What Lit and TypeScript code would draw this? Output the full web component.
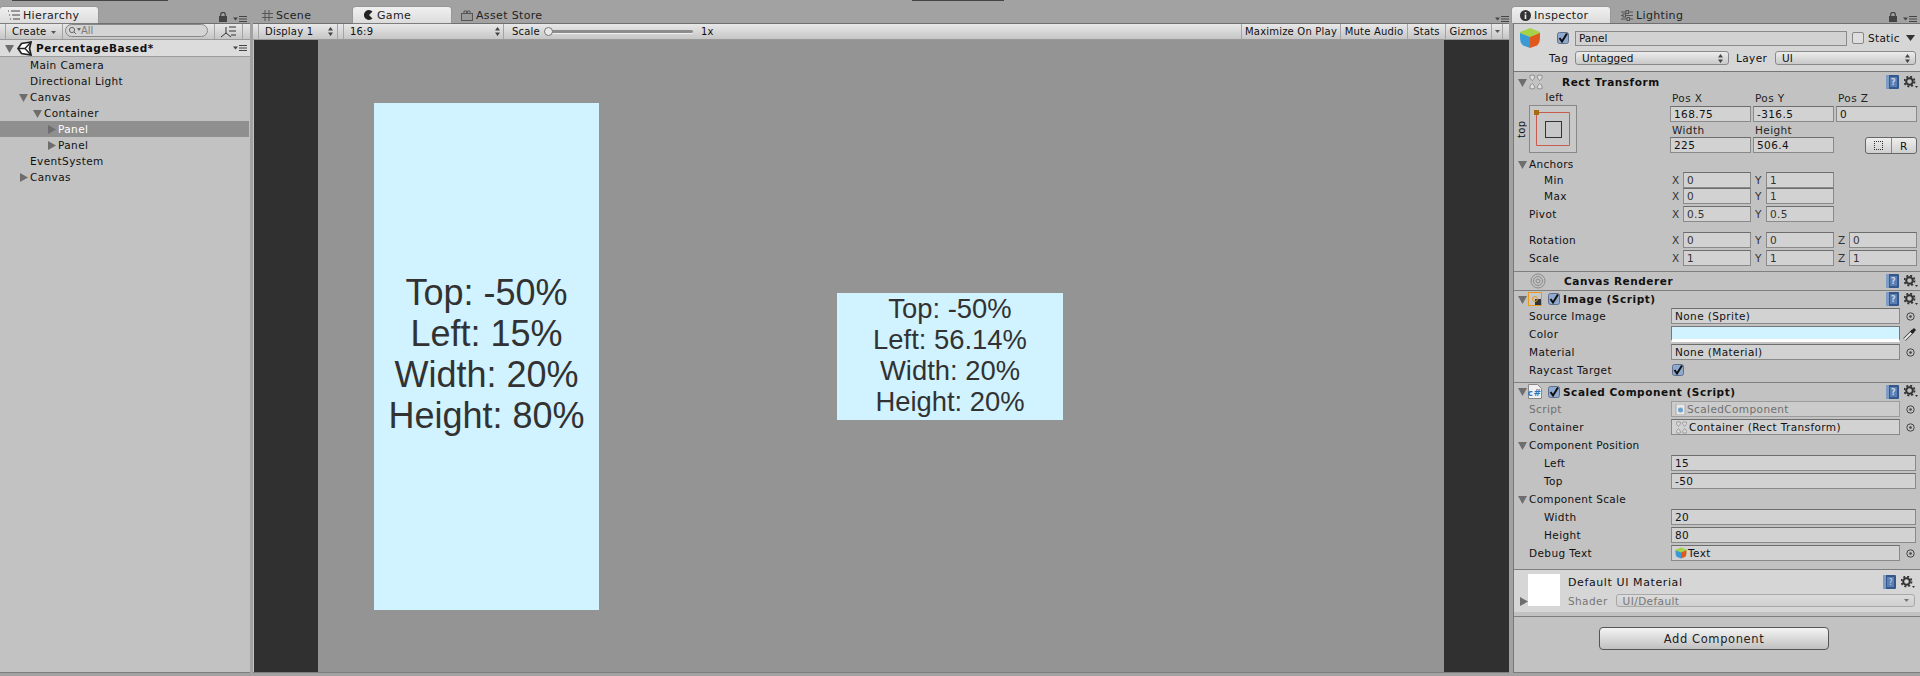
import { LitElement, html, css } from 'lit'
import { customElement } from 'lit/decorators.js'

const arrowDown = html`<svg class="fold" width="9" height="9" viewBox="0 0 9 9"><path d="M0 1h9L4.5 9z" fill="#6e6e6e"/></svg>`
const arrowRight = html`<svg class="fold" width="9" height="9" viewBox="0 0 9 9"><path d="M1 0v9l8-4.5z" fill="#6e6e6e"/></svg>`
const updown = html`<svg class="updown" width="5" height="9" viewBox="0 0 5 9"><path d="M0 3.5h5L2.5 0zM0 5.5h5L2.5 9z" fill="#444"/></svg>`
const menuIcon = html`<svg class="menu" width="14" height="6" viewBox="0 0 14 6"><path d="M0 1.5h5L2.5 4.5z" fill="#444"/><path d="M6 .5h8M6 3h8M6 5.5h8" stroke="#444" fill="none"/></svg>`
const lockIcon = html`<svg width="8" height="10" viewBox="0 0 8 10"><rect y="4" width="8" height="6" fill="#444"/><path d="M1.7 4.5V2.6a2.3 2.3 0 0 1 4.6 0v1.9" fill="none" stroke="#444" stroke-width="1.2"/></svg>`
const cube = (s: number) => html`<svg width=${s} height=${s} viewBox="0 0 22 22">
  <path d="M11 1 21 5v4l-10 4L1 9V5z" fill="#a6d24a"/>
  <path d="M1 6l10 4v11l-7-2.5C2 17 1 14 1 10z" fill="#3a9ad6"/>
  <path d="M21 6l-10 4v11l7-2.5c2-1.500 3-4.500 3-8.500z" fill="#e0591c"/>
</svg>`
const check = html`<svg class="check" width="12" height="12" viewBox="0 0 12 12"><rect x=".5" y=".5" width="11" height="11" rx="2" fill="#8fa9cf" stroke="#5d6f8c"/><path d="M2.500 6l2.500 3.500L10 1.500" fill="none" stroke="#111" stroke-width="2"/></svg>`
const book = html`<svg width="13" height="14" viewBox="0 0 13 14"><rect x="1" width="12" height="14" rx="1" fill="#34588c"/><rect width="3" height="14" fill="#7f9cc4"/><rect x="4" y="2" width="7" height="10" fill="#5b7fb2"/><text x="7.500" y="10" font-size="8" fill="#c9d6e8" text-anchor="middle" font-family="DejaVu Sans">?</text></svg>`
const gear = html`<svg width="14" height="13" viewBox="0 0 14 13"><circle cx="5.500" cy="5.500" r="3.300" fill="none" stroke="#333" stroke-width="2"/><circle cx="5.500" cy="5.500" r="5" fill="none" stroke="#333" stroke-width="1.800" stroke-dasharray="2 1.930"/><path d="M11 10h3l-1.500 2z" fill="#333"/></svg>`
const dotPick = html`<svg class="pick" width="9" height="9" viewBox="0 0 9 9"><circle cx="4.500" cy="4.500" r="3.700" fill="none" stroke="#444"/><circle cx="4.500" cy="4.500" r="1.300" fill="#444"/></svg>`
const rectIcon = (s: number) => html`<svg width=${s} height=${s} viewBox="0 0 16 16" fill="#dedede" stroke="#858585" stroke-width=".9" stroke-linejoin="round">
  <path d="M2 1.500C4 .8 6 1 7 2 6.500 3.500 5.500 5.500 4.500 6.500 3 6 1.500 4 2 1.500z"/>
  <path d="M14 1.500C12 .8 10 1 9 2c.5 1.500 1.500 3.500 2.500 4.500C13 6 14.500 4 14 1.500z"/>
  <path d="M2 14.500C4 15.200 6 15 7 14 6.500 12.500 5.500 10.500 4.500 9.500 3 10 1.500 12 2 14.500z"/>
  <path d="M14 14.500c-2 .7-4 .5-5-.5.5-1.500 1.500-3.500 2.500-4.500 1.500.5 3 2.500 2.500 5z"/>
</svg>`

const treeRows = [
  { name: 'Main Camera', depth: 0 },
  { name: 'Directional Light', depth: 0 },
  { name: 'Canvas', depth: 0, open: true },
  { name: 'Container', depth: 1, open: true },
  { name: 'Panel', depth: 2, closed: true, selected: true },
  { name: 'Panel', depth: 2, closed: true },
  { name: 'EventSystem', depth: 0 },
  { name: 'Canvas', depth: 0, closed: true },
]

const gamePanels = [
  { left: 56, top: 63, w: 225, h: 507, size: 36, line: 41, lift: 6, lines: ['Top: -50%', 'Left: 15%', 'Width: 20%', 'Height: 80%'] },
  { left: 519, top: 253, w: 226, h: 127, size: 27.4, line: 31, lift: 4, lines: ['Top: -50%', 'Left: 56.14%', 'Width: 20%', 'Height: 20%'] },
]

@customElement('app-root')
export class AppRoot extends LitElement {
  static styles = css`
    :host {
      display: block;
      width: 1920px;
      height: 676px;
      overflow: hidden;
      background: #a2a2a2;
      font-family: 'DejaVu Sans', sans-serif;
      font-size: 10.5px;
      color: #111;
    }
    svg { display: block; flex: none; }
    .top-strip { height: 7px; display: flex; }
    .top-strip i { display: block; height: 1px; background: #444; }
    .top-strip .a { width: 156px; margin-left: 12px; }
    .top-strip .b { width: 92px; margin-left: 744px; }
    .main { display: grid; grid-template-columns: 250px 1256px 407px; column-gap: 3px; }
    .main > :last-child { margin-left: 1px; width: 407px; }
    .pane { height: 666px; display: flex; flex-direction: column; }

    .tabs { height: 16px; display: flex; align-items: flex-end; position: relative; }
    .tab {
      height: 16px; width: 98px; display: flex; align-items: center; gap: 3px; box-sizing: border-box;
      padding-left: 8px; font-size: 11px; color: #222; flex: none; letter-spacing: .35px;
    }
    .tab.on { background: linear-gradient(#f0f0f0, #dcdcdc); border-radius: 3px 3px 0 0; box-shadow: 0 0 0 .5px #8c8c8c; }
    .tab.scene { width: 100px; }
    .tab.scene svg { margin-left: 1px; }
    .tab.game svg { margin-left: 2px; }
    .tab.store { padding-left: 10px; }
    .tab.light { padding-left: 11px; width: 90px; }
    .tabs .tail { margin-left: auto; display: flex; align-items: flex-end; gap: 6px; padding: 0 3px 1px 0; }
    .tabs .tail.flush { padding-right: 0; }
    .tabs.pull { margin-left: -1px; }

    .body { flex: 1; height: 650px; background: #c2c2c2; border-top: 1px solid #6f6f6f; border-bottom: 1px solid #7d7d7d; display: flex; flex-direction: column; box-sizing: border-box; }

    .toolbar {
      height: 16px; flex: none; display: flex; align-items: stretch; box-sizing: border-box;
      background: linear-gradient(#e8e8e8, #c6c6c6); border-bottom: 1px solid #999; font-size: 10px;
    }
    .toolbar .cell { display: flex; align-items: center; box-sizing: border-box; border-right: 1px solid #a4a4a4; flex: none; letter-spacing: .2px; }

    /* hierarchy */
    .h-create { width: 58px; padding-left: 6px; margin-left: 5px; border-left: 1px solid #a4a4a4; gap: 5px; }
    .h-create svg { margin-top: 1px; }
    .search {
      width: 143px; height: 13px; margin: 0 6px 0 2px; border: 1px solid #888; border-radius: 8px; flex: none;
      display: flex; align-items: center; padding-left: 2px; box-sizing: border-box; color: #7b7b7b; background: #d4d4d4;
    }
    .h-tool { width: 29px; justify-content: center; border-left: 1px solid #a4a4a4; }
    .scene-row { height: 17px; flex: none; display: flex; align-items: center; background: #dcdcdc; border-bottom: 1px solid #9c9c9c; box-sizing: border-box; padding: 0 3px 0 5px; font-weight: bold; letter-spacing: .55px; }
    .scene-row .logo { margin: 0 4px 0 3px; }
    .scene-row .menu { margin-left: auto; }
    .tree-row { height: 16px; display: flex; align-items: center; letter-spacing: .4px; }
    .tree-row.sel { background: #8f8f8f; color: #fff; margin-right: 1px; }
    .tree-row .twist { width: 11px; flex: none; }
    .tree-row.d0 { padding-left: 19px; }
    .tree-row.d1 { padding-left: 33px; }
    .tree-row.d2 { padding-left: 47px; }
    .tree-row .twist svg { margin-top: 1px; }

    /* game */
    .game-tools .sp { width: 6px; flex: none; border-right: 1px solid #a4a4a4; box-sizing: border-box; }
    .game-tools .first { margin-left: 5px; border-left: 1px solid #a4a4a4; }
    .game-tools .display { width: 80px; padding: 0 4px 0 6px; justify-content: space-between; }
    .game-tools .ratio { width: 160px; padding: 0 3px 0 6px; justify-content: space-between; }
    .game-tools .scale { flex: 1; border-right: 0; padding-left: 8px; gap: 4px; }
    .slider { width: 149px; height: 3px; background: #8c8c8c; border-radius: 2px; position: relative; box-shadow: 0 1px 0 #eee; }
    .slider i { position: absolute; left: 0; top: -3px; width: 9px; height: 9px; border-radius: 50%; background: #e9e9e9; border: 1px solid #777; box-sizing: border-box; }
    .game-tools .scale b { font-weight: normal; margin-left: 4px; }
    .game-tools .btn { justify-content: center; }
    .game-tools .max { width: 100px; border-left: 1px solid #a4a4a4; }
    .game-tools .mute { width: 67px; }
    .game-tools .stats { width: 38px; }
    .game-tools .giz { width: 46px; }
    .game-tools .drop { width: 11px; justify-content: center; }
    .game-tools .end { width: 6px; border-right: 0; }
    .view { flex: 1; display: grid; grid-template-columns: 64px 1126px 64px; margin-left: 1px; background: #303030; }
    .canvas { background: #949494; position: relative; }
    .ui-panel {
      position: absolute; background: #d1f3ff; color: #323232; box-sizing: border-box;
      display: flex; flex-direction: column; align-items: center; justify-content: center;
      font-family: 'Liberation Sans', Arial, sans-serif;
    }

    /* inspector */
    .insp { border-left: 1px solid #777; }
    .obj { height: 48px; flex: none; background: #d6d6d6; box-sizing: border-box; padding: 6px 0 0 5px; border-bottom: 1px solid #777; }
    .obj-line { display: flex; align-items: center; height: 16px; }
    .obj-line.tagline { margin-top: 4px; }
    .obj .thumb { width: 38px; flex: none; }
    .obj-name { width: 272px; height: 15px; margin-left: 6px; background: #d2d2d2; border: 1px solid #8a8a8a; box-sizing: border-box; padding-left: 3px; display: flex; align-items: center; }
    .box { width: 12px; height: 12px; border: 1px solid #888; border-radius: 2px; box-sizing: border-box; background: #dedede; margin-left: 5px; flex: none; }
    .obj-static { margin-left: 4px; letter-spacing: .3px; }
    .tri-down { margin-left: 6px; }
    .tag-l { width: 56px; padding-left: 30px; box-sizing: border-box; flex: none; letter-spacing: .6px; }
    .pop { height: 14px; border: 1px solid #8a8a8a; border-radius: 3px; box-sizing: border-box; background: linear-gradient(#ececec, #c9c9c9); display: flex; align-items: center; justify-content: space-between; padding: 0 5px 0 6px; }
    .pop.tag { width: 154px; }
    .pop.layer { width: 141px; }
    .lay-l { width: 46px; padding-left: 7px; box-sizing: border-box; flex: none; letter-spacing: .4px; }

    .sec { border-top: 1px solid #7f7f7f; flex: none; }
    .sec.none { border-top: 0; }
    .comp-h { display: flex; align-items: center; height: 16px; padding: 0 2px 0 4px; font-weight: bold; letter-spacing: .55px; }
    .comp-h.tall { height: 20px; }
    .comp-h.canvas-h { height: 18px; }
    .comp-h.script-h { height: 17px; }
    .comp-h .blank { width: 11px; flex: none; }
    .comp-h .ic { width: 16px; height: 16px; flex: none; margin-left: 1px; display: flex; align-items: center; }
    .comp-h .cb { margin-left: 4px; flex: none; }
    .comp-h .title { margin-left: 3px; }
    .comp-h .title.wide { margin-left: 18px; }
    .comp-h .right { margin-left: auto; display: flex; align-items: center; gap: 5px; }

    .row { height: 18px; display: grid; grid-template-columns: 156px 1fr; align-items: center; padding-right: 4px; letter-spacing: .4px; }
    .row.s16 { height: 16px; }
    .row.tight { margin-bottom: -1px; }
    .row.pivot { margin-top: 1px; }
    .row.rot { margin-top: 8px; }
    .row.last { margin-bottom: 4px; }
    .row .lbl { padding-left: 15px; display: flex; align-items: center; }
    .row .lbl.fold-l { padding-left: 4px; gap: 2px; letter-spacing: .3px; }
    .row .lbl.sub { padding-left: 30px; }
    .row .dim { color: #6f6f6f; }
    .fld { height: 16px; background: #d2d2d2; border: 1px solid #8a8a8a; border-top-color: #6d6d6d; box-sizing: border-box; padding-left: 3px; display: flex; align-items: center; gap: 1px; white-space: nowrap; overflow: hidden; letter-spacing: .4px; }
    .fld.dim { background: #cbcbcb; border-color: #9c9c9c; }
    .with-pick { display: grid; grid-template-columns: 229px 1fr; align-items: center; margin-left: 1px; }
    .with-pick .pick { margin-left: 6px; }
    .with-pick .dropper { margin-left: 3px; }
    .wide-fld { margin-left: 1px; }
    .color { height: 16px; background: #d1f3ff; border: 1px solid #777; border-bottom: 3px solid #fff; box-sizing: border-box; }
    .ray { margin-left: 2px; }
    .gap3 { height: 3px; }
    .gap7 { height: 7px; }
    .xyz { display: grid; grid-template-columns: repeat(3, 81px); column-gap: 2px; }
    .xyz .c { display: grid; grid-template-columns: 13px 68px; align-items: center; color: #333; }
    .xyz .c span { padding-left: 2px; }
    .rect-grid { display: grid; grid-template-columns: 156px 1fr; height: 63px; padding-right: 4px; letter-spacing: .4px; }
    .anchor { display: grid; grid-template-columns: 15px 48px; grid-template-rows: 13px 48px; }
    .anchor .l { grid-column: 2; padding-left: 3px; text-align: center; line-height: 11px; font-size: 10px; }
    .anchor .t { writing-mode: vertical-rl; transform: rotate(180deg); text-align: center; font-size: 10px; line-height: 15px; grid-row: 2; }
    .anchor .w { grid-column: 2; grid-row: 2; }
    .trip { display: grid; grid-template-columns: repeat(3, 81px); column-gap: 2px; grid-template-rows: 14px 16px 15px 16px; }
    .trip .cap { padding-left: 2px; color: #222; line-height: 12px; }
    .trip .cap.w2 { align-self: center; }
    .rbtns { display: flex; height: 17px; width: 52px; justify-self: end; border: 1px solid #666; border-radius: 3px; box-sizing: border-box; background: linear-gradient(#eee, #cfcfcf); }
    .rbtns span { flex: 1; display: flex; align-items: center; justify-content: center; }
    .rbtns span + span { border-left: 1px solid #888; }
    .rbtns i { display: block; width: 9px; height: 9px; border: 1px dotted #333; box-sizing: border-box; }

    .mat { height: 43px; background: #d6d6d6; border-top: 1px solid #7f7f7f; box-sizing: border-box; display: flex; flex: none; padding: 4px 2px 0 5px; }
    .mat .foldbox { display: flex; align-items: flex-end; height: 32px; }
    .mat .sw { width: 32px; height: 32px; background: #fff; flex: none; }
    .mat .col { flex: 1; padding-left: 8px; }
    .mat .t1 { height: 16px; display: flex; align-items: center; font-size: 11px; letter-spacing: .6px; }
    .mat .t1 .right { margin-left: auto; display: flex; gap: 5px; margin-right: 3px; align-items: center; letter-spacing: 0; }
    .mat .t2 { display: flex; align-items: center; margin-top: 4px; color: #777; letter-spacing: .4px; }
    .mat .pop { margin-left: 8px; width: 299px; height: 13px; color: #777; border-color: #a8a8a8; background: linear-gradient(#dcdcdc, #cfcfcf); }
    .add-wrap { flex: 1; border-top: 1px solid #7f7f7f; margin-top: 4px; display: flex; justify-content: center; padding-top: 10px; }
    .add { width: 230px; height: 23px; margin-left: -6px; border: 1px solid #555; border-radius: 4px; box-sizing: border-box; background: linear-gradient(#f4f4f4, #c0c0c0); display: flex; align-items: center; justify-content: center; font-size: 11.5px; letter-spacing: .6px; color: #222; }
  `

  // a label on the left, a field or other value on the right
  row(label: unknown, value: unknown, kind = '') {
    return html`<div class="row"><div class="lbl ${kind}">${label}</div><div>${value}</div></div>`
  }

  fold(label: string, extra = '') {
    return html`<div class="row ${extra}"><div class="lbl fold-l">${arrowDown}<span>${label}</span></div><div></div></div>`
  }

  picked(text: unknown, dim = false) {
    return html`<div class="with-pick"><div class="fld ${dim ? 'dim' : ''}">${text}</div>${dotPick}</div>`
  }

  xyz(vals: string[]) {
    const names = ['X', 'Y', 'Z']
    return html`<div class="xyz">${vals.map(
      (v, i) => html`<div class="c"><span>${names[i]}</span><div class="fld">${v}</div></div>`,
    )}</div>`
  }

  compRight() {
    return html`<div class="right">${book}${gear}</div>`
  }

  hierarchy() {
    return html`<div class="pane">
      <div class="tabs">
        <div class="tab on"><svg width="12" height="10" viewBox="0 0 12 10"><path d="M0 1h1M3 1h9M1 5h1M4 5h8M2 9h1M5 9h7" stroke="#444" fill="none"/></svg>Hierarchy</div>
        <div class="tail">${lockIcon}${menuIcon}</div>
      </div>
      <div class="body">
        <div class="toolbar">
          <div class="cell h-create">Create<svg width="5" height="3" viewBox="0 0 5 3"><path d="M0 0h5L2.500 3z" fill="#555"/></svg></div>
          <div class="search">
            <svg width="13" height="9" viewBox="0 0 13 9"><circle cx="4" cy="4" r="2.600" fill="none" stroke="#666"/><path d="M6 6l2 2" stroke="#666"/><path d="M9 2h4l-2 3z" fill="#666"/></svg>
            All
          </div>
          <div class="cell h-tool">
            <svg width="17" height="14" viewBox="0 0 17 14"><path d="M1 12l5-4 5 4M6 8V2M9 2h7M9 6h7M11 10h5" stroke="#333" fill="none"/></svg>
          </div>
        </div>
        <div class="scene-row">
          ${arrowDown}
          <svg class="logo" width="15" height="15" viewBox="0 0 15 15"><path d="M14 1 4.500 2.500 1 7.500l3.500 5L14 14l-1.500-6.500z" fill="#fff" stroke="#222" stroke-width="1.700"/><path d="M1 7.500h7L14 1M8 7.500 14 14" stroke="#222" stroke-width="1.400" fill="none"/></svg>
          <span>PercentageBased*</span>
          ${menuIcon}
        </div>
        ${treeRows.map(
          (r) => html`<div class="tree-row d${r.depth} ${r.selected ? 'sel' : ''}">
            ${r.open || r.closed
              ? html`<div class="twist">${r.open ? arrowDown : arrowRight}</div>`
              : html`<div class="twist"></div>`}
            <span>${r.name}</span>
          </div>`,
        )}
      </div>
    </div>`
  }

  game() {
    return html`<div class="pane">
      <div class="tabs">
        <div class="tab scene"><svg width="11" height="11" viewBox="0 0 11 11"><path d="M3 0v11M7 0v11M0 3.500h11M0 7.500h11" stroke="#555" fill="none"/></svg>Scene</div>
        <div class="tab on game"><svg width="11" height="10" viewBox="0 0 11 10"><path d="M9.500 1.500A5 5 0 1 0 9.500 8.500L6 5z" fill="#222"/></svg>Game</div>
        <div class="tab store"><svg width="12" height="11" viewBox="0 0 12 11"><rect x=".5" y="3.500" width="11" height="7" fill="#999" stroke="#555"/><path d="M3 3.500V1h2.500v2.500M6.500 3.500V1H9v2.500" fill="none" stroke="#555"/></svg>Asset&nbsp;Store</div>
        <div class="tail flush">${menuIcon}</div>
      </div>
      <div class="body">
        <div class="toolbar game-tools">
          <div class="cell display first">Display 1 ${updown}</div>
          <div class="sp"></div>
          <div class="cell ratio">16:9 ${updown}</div>
          <div class="cell scale">Scale<div class="slider"><i></i></div><b>1x</b></div>
          <div class="cell btn max">Maximize On Play</div>
          <div class="cell btn mute">Mute Audio</div>
          <div class="cell btn stats">Stats</div>
          <div class="cell btn giz">Gizmos</div>
          <div class="cell drop"><svg width="5" height="3" viewBox="0 0 5 3"><path d="M0 0h5L2.500 3z" fill="#555"/></svg></div>
          <div class="cell end"></div>
        </div>
        <div class="view">
          <div></div>
          <div class="canvas">
            ${gamePanels.map(
              (p) => html`<div class="ui-panel" style="left:${p.left}px;top:${p.top}px;width:${p.w}px;height:${p.h}px;font-size:${p.size}px;line-height:${p.line}px;padding-bottom:${p.lift}px">
                ${p.lines.map((l) => html`<div>${l}</div>`)}
              </div>`,
            )}
          </div>
          <div></div>
        </div>
      </div>
    </div>`
  }

  rectTransform() {
    return html`<div class="comp-h tall">
        ${arrowDown}<div class="ic">${rectIcon(16)}</div><span class="title wide">Rect Transform</span>${this.compRight()}
      </div>
      <div class="rect-grid">
        <div class="anchor">
          <div class="l">left</div>
          <div class="t">top</div>
          <div class="w">
            <svg width="48" height="48" viewBox="0 0 48 48">
              <rect x=".5" y=".5" width="47" height="47" fill="#c8c8c8" stroke="#888"/>
              <path d="M7.500 7.500h33v33h-33z" fill="none" stroke="#c85a50"/>
              <rect x="5" y="5" width="5" height="5" fill="#a66a10"/>
              <rect x="16.500" y="16.500" width="16" height="16" fill="none" stroke="#333"/>
            </svg>
          </div>
        </div>
        <div class="trip">
          <div class="cap">Pos X</div><div class="cap">Pos Y</div><div class="cap">Pos Z</div>
          <div class="fld">168.75</div><div class="fld">-316.5</div><div class="fld">0</div>
          <div class="cap w2">Width</div><div class="cap w2">Height</div><div></div>
          <div class="fld">225</div><div class="fld">506.4</div>
          <div class="rbtns"><span><i></i></span><span>R</span></div>
        </div>
      </div>
      ${this.fold('Anchors', 'tight')}
      <div class="row s16"><div class="lbl sub">Min</div>${this.xyz(['0', '1'])}</div>
      <div class="row s16"><div class="lbl sub">Max</div>${this.xyz(['0', '1'])}</div>
      <div class="row pivot"><div class="lbl">Pivot</div>${this.xyz(['0.5', '0.5'])}</div>
      <div class="row rot"><div class="lbl">Rotation</div>${this.xyz(['0', '0', '0'])}</div>
      <div class="row last"><div class="lbl">Scale</div>${this.xyz(['1', '1', '1'])}</div>`
  }

  inspector() {
    return html`<div class="pane">
      <div class="tabs pull">
        <div class="tab on">
          <svg width="11" height="11" viewBox="0 0 11 11"><circle cx="5.500" cy="5.500" r="5.500" fill="#333"/><rect x="4.700" y="4.500" width="1.600" height="4.500" fill="#eee"/><rect x="4.700" y="2" width="1.600" height="1.600" fill="#eee"/></svg>
          Inspector
        </div>
        <div class="tab light">
          <svg width="12" height="11" viewBox="0 0 12 11"><path d="M0 2h5M8 2h4M0 5.500h2M5 5.500h7M0 9h6M9 9h3" stroke="#555" fill="none"/><rect x="5" y=".5" width="2.500" height="3" fill="none" stroke="#555"/><rect x="2" y="4" width="2.500" height="3" fill="none" stroke="#555"/><rect x="6" y="7.500" width="2.500" height="3" fill="none" stroke="#555"/></svg>
          Lighting
        </div>
        <div class="tail">${lockIcon}${menuIcon}</div>
      </div>
      <div class="body insp">
        <div class="obj">
          <div class="obj-line">
            <div class="thumb">${cube(22)}</div>
            ${check}
            <div class="obj-name">Panel</div>
            <div class="box"></div>
            <span class="obj-static">Static</span>
            <svg class="tri-down" width="9" height="6" viewBox="0 0 9 6"><path d="M0 0h9L4.500 6z" fill="#333"/></svg>
          </div>
          <div class="obj-line tagline">
            <span class="tag-l">Tag</span>
            <div class="pop tag"><span>Untagged</span>${updown}</div>
            <span class="lay-l">Layer</span>
            <div class="pop layer"><span>UI</span>${updown}</div>
          </div>
        </div>
        <div class="sec none">${this.rectTransform()}</div>
        <div class="sec">
          <div class="comp-h canvas-h">
            <div class="blank"></div>
            <div class="ic"><svg width="16" height="16" viewBox="0 0 16 16" fill="none" stroke="#8a8a8a"><circle cx="8" cy="8" r="7"/><circle cx="8" cy="8" r="4.500"/><circle cx="8" cy="8" r="2"/></svg></div>
            <span class="title wide">Canvas Renderer</span>${this.compRight()}
          </div>
        </div>
        <div class="sec">
          <div class="comp-h">
            ${arrowDown}
            <div class="ic"><svg width="14" height="14" viewBox="0 0 14 14"><rect width="14" height="14" fill="#e89a1c"/><rect x="1" y="1" width="12" height="12" fill="#c8c8c8"/><rect x="7" y="7" width="6" height="6" fill="#333"/><circle cx="7" cy="7" r="2.500" fill="none" stroke="#e89a1c"/></svg></div>
            <div class="cb">${check}</div>
            <span class="title">Image (Script)</span>${this.compRight()}
          </div>
          ${this.row('Source Image', this.picked('None (Sprite)'))}
          ${this.row('Color', html`<div class="with-pick"><div class="color"></div><svg class="dropper" width="14" height="14" viewBox="0 0 14 14"><path d="M1.500 12.500 8.500 5.500" stroke="#333" stroke-width="3.400"/><path d="M1.500 12.500 8.500 5.500" stroke="#f2f2f2" stroke-width="1.800"/><path d="M8 3.500l2.500 2.500" stroke="#222" stroke-width="3"/><path d="M9.500 4.500 12 2" stroke="#222" stroke-width="3"/></svg></div>`)}
          ${this.row('Material', this.picked('None (Material)'))}
          ${this.row('Raycast Target', html`<div class="ray">${check}</div>`)}
          <div class="gap3"></div>
        </div>
        <div class="sec">
          <div class="comp-h script-h">
            ${arrowDown}
            <div class="ic"><svg width="14" height="15" viewBox="0 0 14 15"><path d="M.5.5h9l4 4v10H.5z" fill="#f0f0f0" stroke="#888"/><text x="6.500" y="12" font-size="9" font-weight="bold" fill="#2a74b8" text-anchor="middle" font-family="DejaVu Sans">c#</text></svg></div>
            <div class="cb">${check}</div>
            <span class="title">Scaled Component (Script)</span>${this.compRight()}
          </div>
          ${this.row(html`<span class="dim">Script</span>`, this.picked(html`<svg width="11" height="11" viewBox="0 0 11 11"><rect x="1" width="9" height="11" fill="#e8e8e8" stroke="#aaa"/><circle cx="5.500" cy="6" r="2.500" fill="#6aa3d0"/></svg><span class="dim">ScaledComponent</span>`, true))}
          ${this.row('Container', this.picked(html`${rectIcon(13)}Container (Rect Transform)`))}
          ${this.fold('Component Position')}
          ${this.row('Left', html`<div class="fld wide-fld">15</div>`, 'sub')}
          ${this.row('Top', html`<div class="fld wide-fld">-50</div>`, 'sub')}
          ${this.fold('Component Scale')}
          ${this.row('Width', html`<div class="fld wide-fld">20</div>`, 'sub')}
          ${this.row('Height', html`<div class="fld wide-fld">80</div>`, 'sub')}
          ${this.row('Debug Text', this.picked(html`${cube(12)}Text`))}
          <div class="gap7"></div>
        </div>
        <div class="mat">
          <div class="foldbox">${arrowRight}</div>
          <div class="sw"></div>
          <div class="col">
            <div class="t1">Default UI Material<div class="right">${book}${gear}</div></div>
            <div class="t2">Shader<div class="pop"><span>UI/Default</span><svg width="5" height="3" viewBox="0 0 5 3"><path d="M0 0h5L2.500 3z" fill="#777"/></svg></div></div>
          </div>
        </div>
        <div class="add-wrap"><div class="add">Add Component</div></div>
      </div>
    </div>`
  }

  render() {
    return html`
      <div class="top-strip"><i class="a"></i><i class="b"></i></div>
      <div class="main">${this.hierarchy()}${this.game()}${this.inspector()}</div>
    `
  }
}
